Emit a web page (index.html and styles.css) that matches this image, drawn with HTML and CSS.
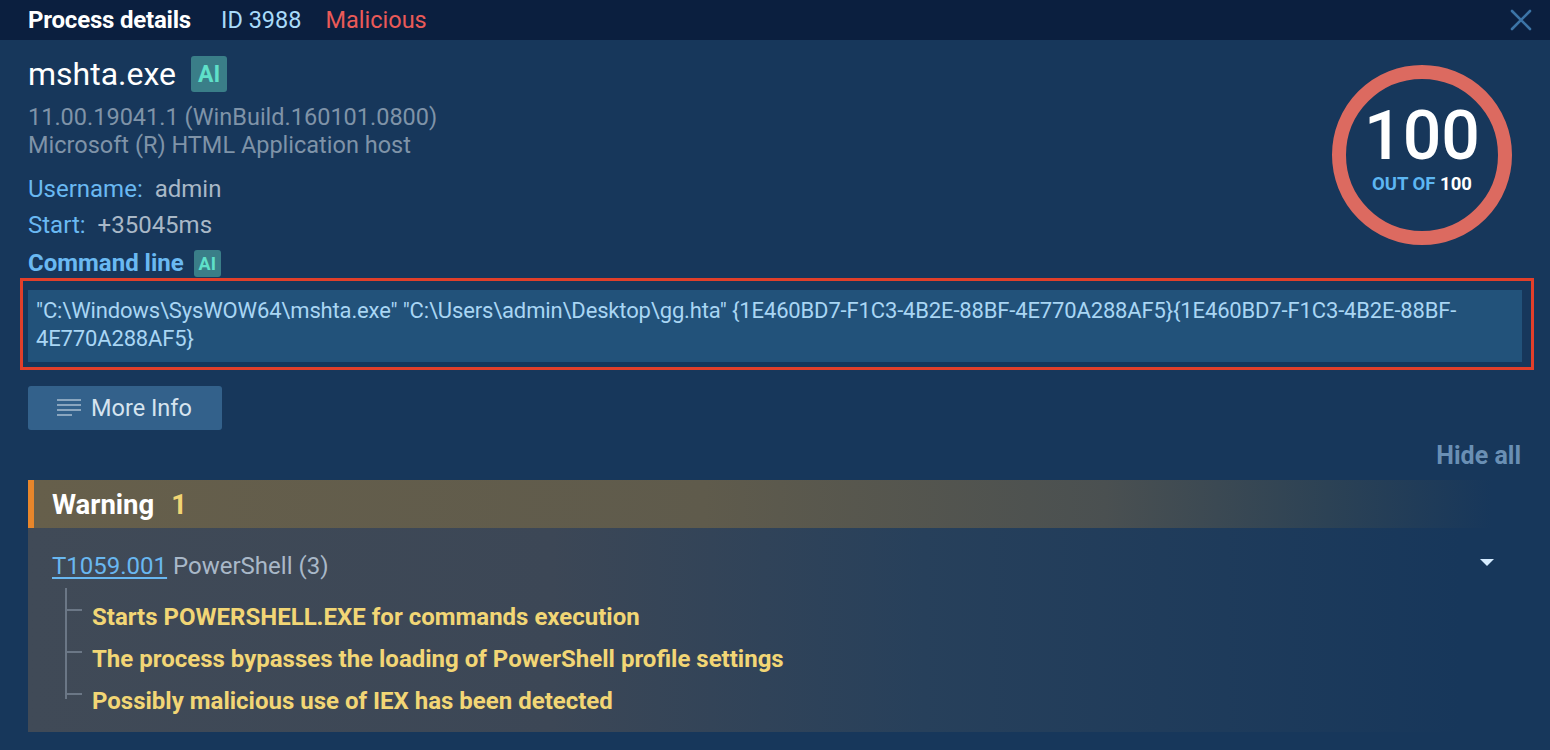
FILE: index.html
```html
<!DOCTYPE html>
<html lang="en">
<head>
<meta charset="utf-8">
<title>Process details</title>
<link rel="stylesheet" href="styles.css">
</head>
<body>
<header class="topbar">
  <span class="title">Process details</span>
  <span class="pid">ID 3988</span>
  <span class="verdict">Malicious</span>
  <button class="close" aria-label="Close">
    <svg width="22" height="22" viewBox="0 0 22 22"><path d="M2 2 L20 20 M20 2 L2 20" stroke="#3c74a6" stroke-width="2.6" stroke-linecap="round" fill="none"/></svg>
  </button>
</header>
<main class="content">
  <section class="summary">
    <div class="info">
      <div class="name-row"><h1 class="name">mshta.exe</h1><span class="ai ai-lg">AI</span></div>
      <div class="version">11.00.19041.1 (WinBuild.160101.0800)<br>Microsoft (R) HTML Application host</div>
      <div class="field"><span class="label">Username:</span><span class="value">admin</span></div>
      <div class="field"><span class="label">Start:</span><span class="value">+35045ms</span></div>
      <div class="field cmd-row"><span class="label strong">Command line</span><span class="ai ai-sm">AI</span></div>
    </div>
    <div class="score">
      <svg width="180" height="180" viewBox="0 0 180 180"><circle cx="90" cy="90" r="83" fill="none" stroke="#dc6a60" stroke-width="14"/></svg>
      <div class="score-text">
        <div class="score-num">100</div>
        <div class="score-sub"><span class="of">OUT OF</span> 100</div>
      </div>
    </div>
  </section>
  <div class="highlight">
    <div class="cmd">"C:\Windows\SysWOW64\mshta.exe" "C:\Users\admin\Desktop\gg.hta" {1E460BD7-F1C3-4B2E-88BF-4E770A288AF5}{1E460BD7-F1C3-4B2E-88BF-4E770A288AF5}</div>
  </div>
  <button class="more">
    <svg width="24" height="22" viewBox="0 0 24 22"><g fill="#8aa6bf"><rect x="0" y="2" width="24" height="2"/><rect x="0" y="7" width="24" height="2"/><rect x="0" y="12" width="24" height="2"/><rect x="0" y="17" width="15" height="2"/></g></svg>
    <span>More Info</span>
  </button>
  <div class="hide-row"><span class="hide-all">Hide all</span></div>
  <section class="warning">
    <div class="warn-head"><span class="warn-title">Warning</span><span class="warn-count">1</span></div>
    <div class="warn-body">
      <div class="tech-row">
        <span class="tech"><a class="tech-id" href="#">T1059.001</a> <span class="tech-name">PowerShell (3)</span></span>
        <svg class="caret" width="14" height="8" viewBox="0 0 14 8"><path d="M0 0 H14 L7 7 Z" fill="#d6ecff"/></svg>
      </div>
      <ul class="tree">
        <li>Starts POWERSHELL.EXE for commands execution</li>
        <li>The process bypasses the loading of PowerShell profile settings</li>
        <li>Possibly malicious use of IEX has been detected</li>
      </ul>
    </div>
  </section>
</main>
</body>
</html>
```
FILE: styles.css
```css
* { box-sizing: border-box; }
html, body { margin: 0; padding: 0; }
body {
  background: #17375b;
  font-family: Roboto, "Liberation Sans", sans-serif;
  color: #ffffff;
  width: 1550px;
  height: 750px;
  overflow: hidden;
}
.topbar {
  height: 40px;
  background: #0b1f3f;
  display: flex;
  align-items: center;
  padding-left: 28px;
  position: relative;
}
.title { font-size: 24px; font-weight: 700; color: #fff; margin-right: 30px; letter-spacing: -0.2px; }
.pid { font-size: 23.5px; color: #a9dbfa; margin-right: 24px; }
.verdict { font-size: 23.5px; color: #ea5a58; }
.close {
  margin-left: auto;
  margin-right: 18px;
  background: none;
  border: 0;
  padding: 0;
  width: 22px;
  height: 22px;
  display: flex;
}
.content { padding: 0 28px; }
.summary { display: flex; justify-content: space-between; }
.info { padding-top: 16px; }
.name-row { display: flex; align-items: center; height: 36px; }
.name { margin: 0; font-size: 32px; font-weight: 400; color: #fff; }
.ai {
  display: inline-flex;
  align-items: center;
  justify-content: center;
  background: #3a7e88;
  color: #5fe0c9;
  font-weight: 700;
  border-radius: 3px;
}
.ai-lg { width: 36px; height: 36px; font-size: 23px; margin-left: 15px; }
.ai-sm { width: 27px; height: 27px; font-size: 18px; margin-left: 10px; }
.version {
  margin-top: 11px;
  font-size: 23.5px;
  line-height: 28px;
  color: #7f93a8;
}
.field { display: flex; align-items: center; height: 36px; font-size: 24px; }
.version + .field { margin-top: 12px; }
.label { color: #6ab9f2; margin-right: 12px; }
.label.strong { font-weight: 700; margin-right: 0; }
.value { color: #a9b8c7; }
.cmd-row { height: 30px; margin-top: 5px; }
.score {
  position: relative;
  width: 180px;
  height: 180px;
  margin-top: 25px;
  margin-right: 10px;
}
.score svg { display: block; }
.score-text {
  position: absolute;
  inset: 0;
  display: flex;
  flex-direction: column;
  align-items: center;
  padding-top: 33px;
}
.score-num { font-size: 68px; font-weight: 500; line-height: 76px; color: #fff; }
.score-sub { font-size: 18.5px; font-weight: 700; color: #fff; margin-top: -1px; }
.score-sub .of { color: #5db6f2; }
.highlight {
  margin-left: -8px;
  margin-right: -12px;
  border: 3px solid #e23f2a;
  padding: 9px 9px 5px 5px;
}
.cmd {
  background: #22527a;
  color: #a9d6f4;
  font-size: 22px;
  letter-spacing: -0.15px;
  line-height: 28px;
  padding: 7px 8px 9px 8px;
}
.more {
  margin-top: 16px;
  height: 44px;
  width: 194px;
  background: #33618b;
  border: 0;
  border-radius: 3px;
  display: flex;
  align-items: center;
  padding: 0 0 0 29px;
  font-family: inherit;
  font-size: 23.5px;
  color: #d6e4ef;
  gap: 10px;
}
.more svg { display: block; }
.hide-row { display: flex; justify-content: flex-end; margin-top: 10px; height: 30px; align-items: center; }
.hide-all { font-size: 25px; font-weight: 700; color: #6a8fb4; margin-right: 1px; }
.warning { margin-top: 10px; }
.warn-head {
  height: 48px;
  border-left: 6px solid #e8862b;
  background: linear-gradient(90deg, #665f4b 0%, #5f5b4c 45%, #4a5051 72%, #2c4255 87%, rgba(23,55,91,0) 98%);
  display: flex;
  align-items: center;
  padding-left: 18px;
  font-size: 27.5px;
  font-weight: 700;
}
.warn-title { color: #fff; margin-right: 17px; }
.warn-count { color: #f1d574; }
.warn-body {
  height: 204px;
  background: linear-gradient(90deg, #404a57 0%, #3c4756 35%, #27405b 60%, rgba(23,55,91,0) 96%);
  padding: 24px 28px 0 24px;
}
.tech-row { display: flex; justify-content: space-between; align-items: center; height: 28px; }
.tech { font-size: 24px; }
.tech-id { color: #69b7f0; text-decoration: underline; text-underline-offset: 3px; text-decoration-thickness: 2px; }
.tech-name { color: #a9b8c8; }
.caret { display: block; margin-top: -6px; }
.tree {
  list-style: none;
  margin: 8px 0 0 13px;
  padding: 8px 0 0 27px;
  position: relative;
  width: fit-content;
}
.tree::before {
  content: "";
  position: absolute;
  left: 0;
  top: 0;
  bottom: 23px;
  width: 2px;
  background: #6b7786;
}
.tree li {
  position: relative;
  font-size: 24px;
  font-weight: 700;
  color: #f2d675;
  line-height: 42px;
}
.tree li::before {
  content: "";
  position: absolute;
  left: -25px;
  top: 13px;
  width: 15px;
  height: 2px;
  background: #6b7786;
}
```
